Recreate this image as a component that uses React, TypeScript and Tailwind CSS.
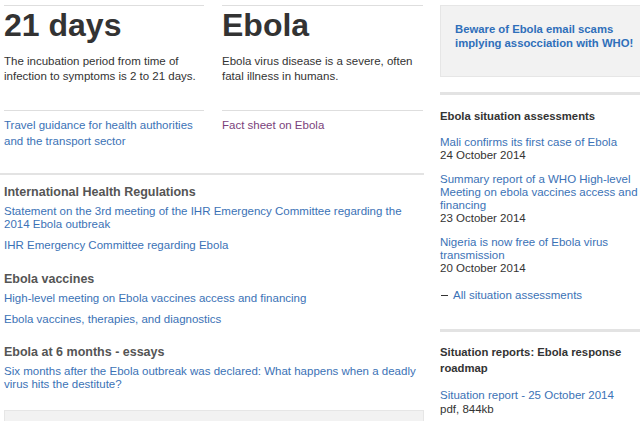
export default function App() {
  const link = "text-[#3b72b6]";
  return (
    <div className="w-[640px] h-[421px] overflow-hidden bg-white text-[11.5px] text-[#333] font-['Liberation_Sans',Arial,sans-serif] flex">
      <div className="w-[424px] shrink-0 pl-1 pt-[5px]">
        <div className="flex gap-[18px]">
          <div className="w-[200px]">
            <div className="border-t border-[#dedede]">
              <h1 className="text-[32px] leading-[36px] font-bold text-[#333] mt-px">21 days</h1>
              <p className="leading-[15px] mt-[11px] h-[56px]">
                The incubation period from time of infection to symptoms is 2 to 21 days.
              </p>
            </div>
            <div className="border-t border-[#dedede] pt-[6px] leading-[16px]">
              <a className={link}>Travel guidance for health authorities and the transport sector</a>
            </div>
          </div>
          <div className="w-[201px]">
            <div className="border-t border-[#dedede]">
              <h1 className="text-[32px] leading-[36px] font-bold text-[#333] mt-px">Ebola</h1>
              <p className="leading-[15px] mt-[11px] h-[56px]">
                Ebola virus disease is a severe, often fatal illness in humans.
              </p>
            </div>
            <div className="border-t border-[#dedede] pt-[6px] leading-[16px]">
              <a className="text-[#7b3f7b]">Fact sheet on Ebola</a>
            </div>
          </div>
        </div>

        <div className="mt-[24px] -ml-1 border-t-2 border-[#e3e3e3] pl-1 pt-[9px]">
          <h3 className="font-bold text-[12.5px] text-[#555] leading-[16px]">International Health Regulations</h3>
          <ul className="mt-[5px] leading-[13px] flex flex-col gap-[8px]">
            <li><a className={link}>Statement on the 3rd meeting of the IHR Emergency Committee regarding the 2014 Ebola outbreak</a></li>
            <li><a className={link}>IHR Emergency Committee regarding Ebola</a></li>
          </ul>

          <h3 className="font-bold text-[12.5px] text-[#555] leading-[16px] mt-[19px]">Ebola vaccines</h3>
          <ul className="mt-[5px] leading-[13px] flex flex-col gap-[8px]">
            <li><a className={link}>High-level meeting on Ebola vaccines access and financing</a></li>
            <li><a className={link}>Ebola vaccines, therapies, and diagnostics</a></li>
          </ul>

          <h3 className="font-bold text-[12.5px] text-[#555] leading-[16px] mt-[18px]">Ebola at 6 months - essays</h3>
          <ul className="mt-[5px] leading-[13px]">
            <li><a className={link}>Six months after the Ebola outbreak was declared: What happens when a deadly virus hits the destitute?</a></li>
          </ul>

          <div className="mt-[19px] h-[40px] bg-[#f2f2f2] border border-[#e6e6e6]" />
        </div>
      </div>

      <div className="ml-4 flex-1 pt-[5px]">
        <div className="h-[72px] bg-[#f2f2f2] border border-[#e6e6e6] border-r-0 pl-[14px] pt-[16px]">
          <a className="font-bold text-[11.3px] text-[#2f6fba] leading-[14px] block whitespace-nowrap">
            Beware of Ebola email scams
            <br />
            implying assocciation with WHO!
          </a>
        </div>

        <div className="mt-[15px] border-t-[3px] border-[#e3e3e3] pt-[13px]">
          <h3 className="font-bold text-[11.3px] text-[#333] leading-[16px]">Ebola situation assessments</h3>
          <ul className="mt-[12px] leading-[13px] flex flex-col gap-[11px]">
            <li><a className={`${link} block`}>Mali confirms its first case of Ebola</a>24 October 2014</li>
            <li><a className={`${link} block`}>Summary report of a WHO High-level Meeting on ebola vaccines access and financing</a>23 October 2014</li>
            <li><a className={`${link} block`}>Nigeria is now free of Ebola virus transmission</a>20 October 2014</li>
          </ul>
          <div className="mt-[13px] flex items-center leading-[14px]">
            <span className="w-[7px] h-px bg-[#333] ml-px mr-[5px]" />
            <a className={link}>All situation assessments</a>
          </div>
        </div>

        <div className="mt-[27px] border-t-[3px] border-[#e3e3e3] pt-[12px]">
          <h3 className="font-bold text-[11.3px] text-[#333] leading-[16px]">Situation reports: Ebola response roadmap</h3>
          <p className="mt-[12px] leading-[14px]">
            <a className={`${link} block`}>Situation report - 25 October 2014</a>
            pdf, 844kb
          </p>
        </div>
      </div>
    </div>
  );
}
